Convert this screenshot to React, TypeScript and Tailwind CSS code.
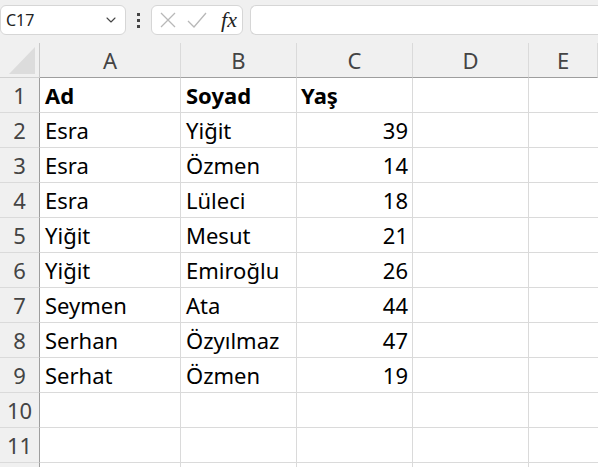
import { ChevronDown } from "lucide-react";

const columns = [
  { label: "A", width: "w-[141px]" },
  { label: "B", width: "w-[116px]" },
  { label: "C", width: "w-[116px]" },
  { label: "D", width: "w-[116px]" },
  { label: "E", width: "flex-1" },
];

type Row = [string, string, string];

const rows: Row[] = [
  ["Ad", "Soyad", "Yaş"],
  ["Esra", "Yiğit", "39"],
  ["Esra", "Özmen", "14"],
  ["Esra", "Lüleci", "18"],
  ["Yiğit", "Mesut", "21"],
  ["Yiğit", "Emiroğlu", "26"],
  ["Seymen", "Ata", "44"],
  ["Serhan", "Özyılmaz", "47"],
  ["Serhat", "Özmen", "19"],
  ["", "", ""],
  ["", "", ""],
];

const Toolbar = () => {
  return (
    <div className="flex items-start h-[43px] pt-[5px] bg-[#f0f0f0]">
      <div className="w-[126px] h-[30px] bg-white border border-[#d6d6d6] rounded-[6px] flex items-center justify-between pl-[5px] pr-[6px]">
        <span className="text-[16px] text-[#222]">C17</span>
        <ChevronDown size={16} strokeWidth={1.6} className="text-[#444]" />
      </div>
      <div className="w-[25px] h-[30px] flex flex-col items-center justify-center gap-[3px]">
        <span className="w-[3px] h-[3px] bg-[#444]"></span>
        <span className="w-[3px] h-[3px] bg-[#444]"></span>
        <span className="w-[3px] h-[3px] bg-[#444]"></span>
      </div>
      <div className="w-[92px] h-[30px] bg-white border border-[#d6d6d6] rounded-[6px] flex items-center pl-[8px] pr-[5px]">
        <svg width="16" height="16" viewBox="0 0 16 16" className="text-[#b8b8b8]">
          <path d="M1 1 L15 15 M15 1 L1 15" stroke="currentColor" strokeWidth="1.3" fill="none" />
        </svg>
        <svg width="20" height="16" viewBox="0 0 20 16" className="ml-[11px] text-[#b8b8b8]">
          <path d="M1 9 L7 15 L19 1" stroke="currentColor" strokeWidth="1.3" fill="none" />
        </svg>
        <span className="ml-auto text-[22px] italic text-[#222] font-['Liberation_Serif',serif] leading-none">
          fx
        </span>
      </div>
      <div className="ml-[7px] flex-1 h-[30px] bg-white border border-[#d6d6d6] rounded-l-[6px] border-r-0"></div>
    </div>
  );
};

const App = () => {
  return (
    <div className="w-[598px] h-[467px] overflow-hidden bg-white font-['Noto_Sans',sans-serif]">
      <Toolbar />
      <div className="flex h-[35px] bg-[#f0f0f0]">
        <div className="w-[40px] border-r border-r-[#c8c8c8] border-b border-b-[#d0d0d0] relative">
          <svg width="27" height="28" viewBox="0 0 27 28" className="absolute left-[9px] top-[4px]">
            <path d="M0 27 L26 27 L26 0 Z" fill="#dcdcdc" />
          </svg>
        </div>
        {columns.map((col) => (
          <div
            key={col.label}
            className={`${col.width} border-r border-r-[#dadada] border-b border-b-[#9e9e9e] flex items-center justify-center text-[22px] text-[#444]`}
          >
            {col.label}
          </div>
        ))}
      </div>
      {rows.map((row, i) => (
        <div key={i} className="flex h-[35px]">
          <div className="w-[40px] bg-[#f0f0f0] border-r border-r-[#9e9e9e] border-b border-b-[#dadada] flex items-center justify-center text-[22px] text-[#444]">
            {i + 1}
          </div>
          <div
            className={`w-[141px] border-r border-b border-[#dadada] flex items-center px-[5px] text-[22px] text-black ${i === 0 ? "font-bold" : ""}`}
          >
            {row[0]}
          </div>
          <div
            className={`w-[116px] border-r border-b border-[#dadada] flex items-center px-[5px] text-[22px] text-black whitespace-nowrap ${i === 0 ? "font-bold" : ""}`}
          >
            {row[1]}
          </div>
          <div
            className={`w-[116px] border-r border-b border-[#dadada] flex items-center px-[4px] text-[22px] text-black ${i === 0 ? "font-bold justify-start" : "justify-end"}`}
          >
            {row[2]}
          </div>
          <div className="w-[116px] border-r border-b border-[#dadada]"></div>
          <div className="flex-1 border-b border-[#dadada]"></div>
        </div>
      ))}
      {/* next row, only a sliver shows */}
      <div className="flex h-[35px]">
        <div className="w-[40px] bg-[#f0f0f0] border-r border-r-[#9e9e9e]"></div>
        <div className="w-[141px] border-r border-[#dadada]"></div>
        <div className="w-[116px] border-r border-[#dadada]"></div>
        <div className="w-[116px] border-r border-[#dadada]"></div>
        <div className="w-[116px] border-r border-[#dadada]"></div>
        <div className="flex-1"></div>
      </div>
    </div>
  );
};

export default App;
